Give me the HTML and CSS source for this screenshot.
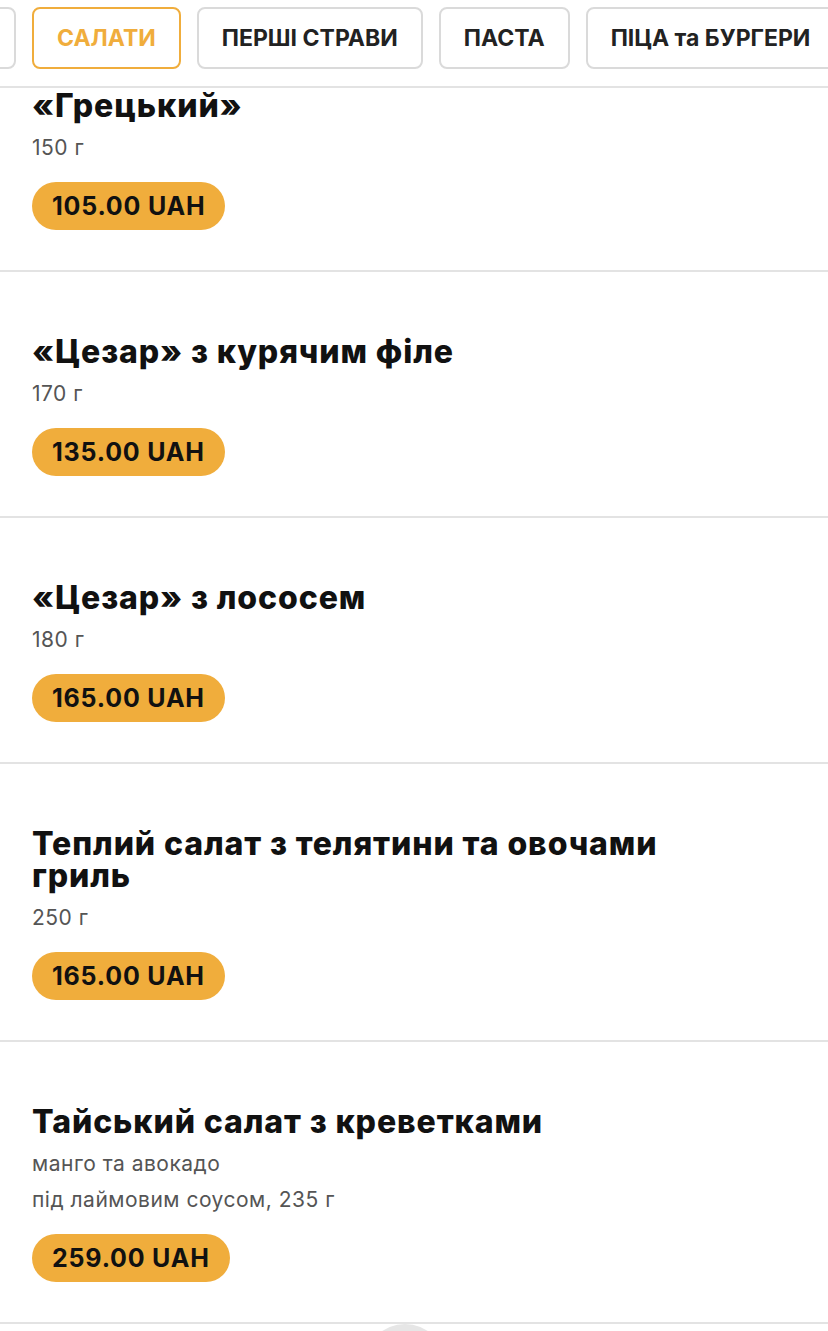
FILE: index.html
```html
<!DOCTYPE html>
<html lang="uk">
<head>
  <meta charset="UTF-8" />
  <meta name="viewport" content="width=device-width, initial-scale=1" />
  <title>Меню — Салати</title>
  <link rel="stylesheet" href="styles.css">
</head>
<body>

  <!-- Category tabs (scrolled so the first one is mostly hidden) -->
  <header class="tabs">
    <div class="tabs-track">
      <button class="tab tab-cut" aria-label="Закуски"></button>
      <button class="tab active">САЛАТИ</button>
      <button class="tab">ПЕРШІ СТРАВИ</button>
      <button class="tab">ПАСТА</button>
      <button class="tab">ПІЦА та БУРГЕРИ</button>
    </div>
  </header>

  <main class="menu">
    <div class="dish">
      <h2 class="dish-name">«Грецький»</h2>
      <p class="dish-weight">150 г</p>
      <span class="price">105.00 UAH</span>
    </div>

    <div class="dish">
      <h2 class="dish-name">«Цезар» з курячим філе</h2>
      <p class="dish-weight">170 г</p>
      <span class="price">135.00 UAH</span>
    </div>

    <div class="dish">
      <h2 class="dish-name">«Цезар» з лососем</h2>
      <p class="dish-weight">180 г</p>
      <span class="price">165.00 UAH</span>
    </div>

    <div class="dish">
      <h2 class="dish-name">Теплий салат з телятини та овочами гриль</h2>
      <p class="dish-weight">250 г</p>
      <span class="price">165.00 UAH</span>
    </div>

    <div class="dish">
      <h2 class="dish-name">Тайський салат з креветками</h2>
      <p class="dish-weight">манго та авокадо<br>під лаймовим соусом, 235 г</p>
      <span class="price">259.00 UAH</span>
    </div>

    <div class="to-top"></div>
  </main>

</body>
</html>
```

FILE: styles.css
```css
:root {
  --accent: #f0ad3c;
  --line: #e3e3e3;
  --text: #111;
  --muted: #555;
}

body {
  margin: 0;
  background: #fff;
  color: var(--text);
  font-family: 'Inter', 'Noto Sans', sans-serif;
  overflow: hidden;
}

/* Tabs */
.tabs {
  position: sticky;
  top: 0;
  z-index: 10;
  background: #fff;
  padding: 7px 0 17px;
  border-bottom: 2px solid var(--line);
  overflow: hidden;
}

.tabs-track {
  display: flex;
  gap: 16px;
  margin-left: -164px;
}

.tab {
  flex: none;
  height: 62px;
  padding: 0 23px;
  border: 2px solid #dadada;
  border-radius: 8px;
  background: #fff;
  color: #222;
  font-family: inherit;
  font-size: 23px;
  font-weight: 700;
  white-space: nowrap;
  cursor: pointer;
}

.tab-cut {
  width: 180px;
}

.tab.active {
  border-color: var(--accent);
  color: var(--accent);
}

/* Dishes */
.menu {
  margin-top: -62px;
}

.dish {
  padding: 64px 32px 40px;
  border-bottom: 2px solid var(--line);
}

.dish-name {
  margin: 0;
  max-width: 700px;
  font-size: 32px;
  line-height: 32px;
  font-weight: 800;
  letter-spacing: 0.9px;
}

.dish-weight {
  margin: 8px 0 16px;
  font-size: 21px;
  line-height: 36px;
  letter-spacing: 0.5px;
  color: var(--muted);
}

.price {
  display: inline-block;
  height: 48px;
  line-height: 48px;
  padding: 0 20px;
  border-radius: 24px;
  background: var(--accent);
  font-size: 25px;
  font-weight: 700;
  letter-spacing: 0.8px;
  color: #111;
}

.to-top {
  width: 80px;
  height: 80px;
  margin-left: 365px;
  border-radius: 50%;
  background: #e6e6e6;
}
```
